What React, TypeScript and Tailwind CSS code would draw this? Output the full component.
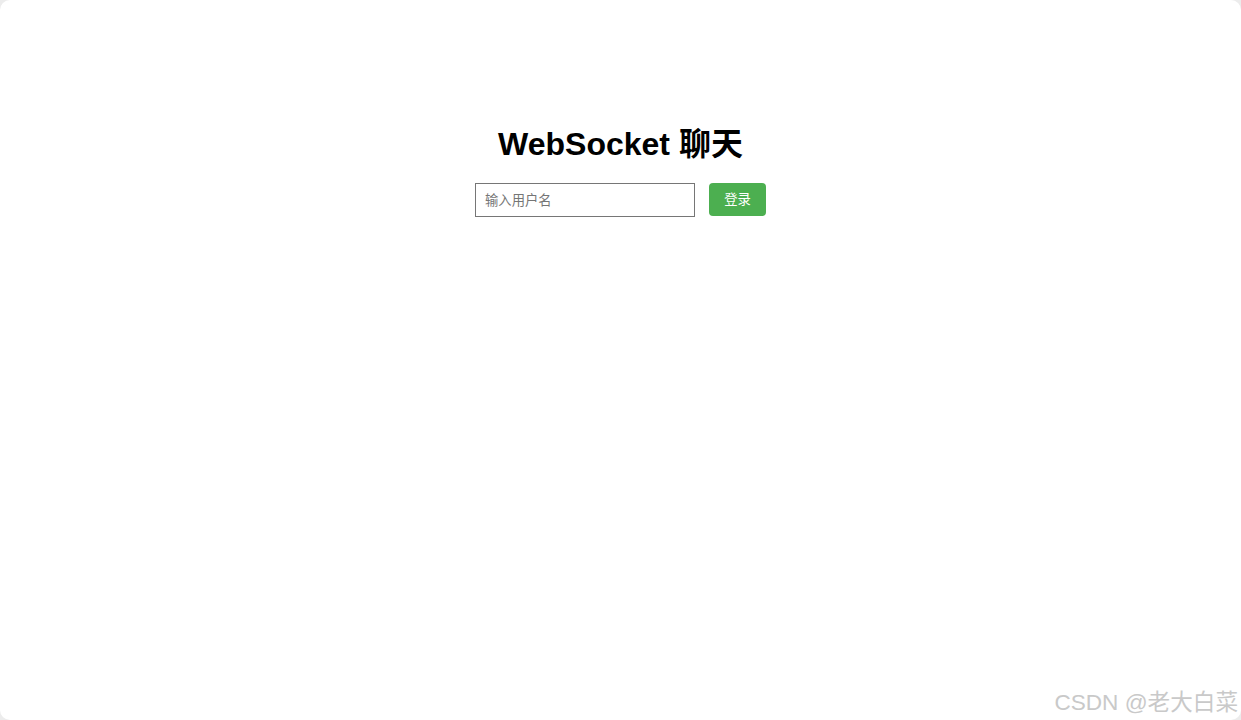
export default function App() {
  return (
    <div className="w-[1241px] h-[720px] bg-[#ececec]">
      <div
        className="relative w-full h-full bg-white rounded-[10px] flex flex-col items-center pt-[126px]"
        style={{ fontFamily: '"Liberation Sans", Arial, "Noto Sans CJK SC", sans-serif' }}
      >
        <h1 className="text-[32px] leading-[37px] font-bold text-black">WebSocket 聊天</h1>
        <div className="flex items-start mt-[20px]">
          <input
            placeholder="输入用户名"
            className="w-[220px] h-[34px] border border-[#767676] px-[9px] text-[13.33px] text-black placeholder:text-[#757575] outline-none"
          />
          <button className="ml-[14px] w-[57px] h-[33px] bg-[#4caf50] text-white text-[13.33px] rounded-[4px]">
            登录
          </button>
        </div>
        <div className="absolute right-[3px] bottom-[4px] text-[22.6px] leading-[26px] text-[#c9c9c9]">
          CSDN @老大白菜
        </div>
      </div>
    </div>
  );
}
